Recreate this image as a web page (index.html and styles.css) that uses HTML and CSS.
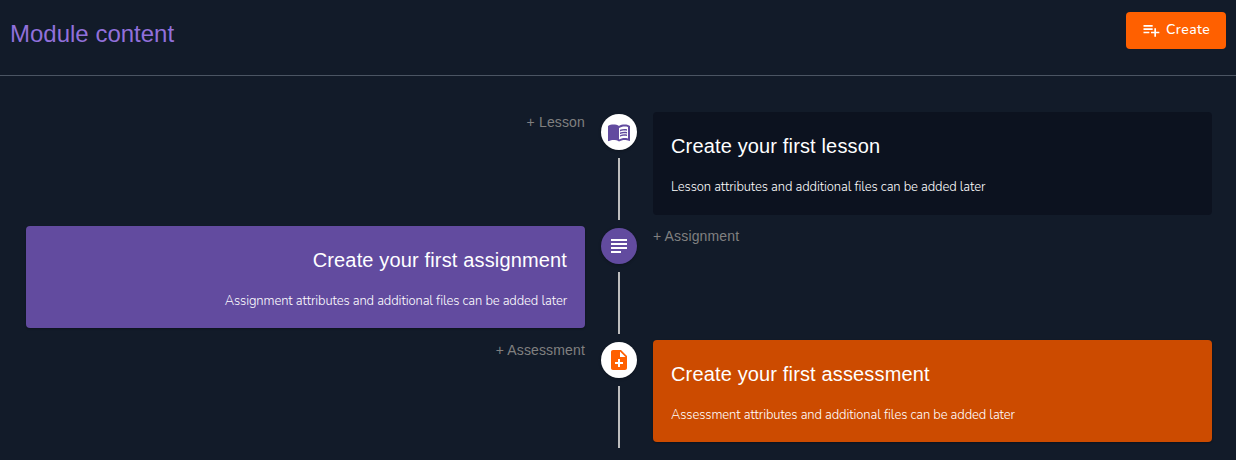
FILE: index.html
```html
<!DOCTYPE html>
<html lang="en">
<head>
<meta charset="utf-8">
<title>Module content</title>
<link rel="stylesheet" href="styles.css">
</head>
<body>
<header class="header">
  <h1 class="title">Module content</h1>
  <button class="create">
    <svg class="create-icon" viewBox="0 0 24 24"><path d="M14 10H3v2h11v-2zm0-4H3v2h11V6zm4 8v-4h-2v4h-4v2h4v4h2v-4h4v-2h-4zM3 16h7v-2H3v2z"/></svg>
    <span class="create-label">Create</span>
  </button>
</header>
<main class="timeline">
  <section class="row">
    <div class="label label-left">+ Lesson</div>
    <div class="separator">
      <div class="dot dot-lesson"><svg class="icon" viewBox="0 0 24 24"><path d="M21 5c-1.11-.35-2.33-.5-3.5-.5-1.95 0-4.05.4-5.5 1.5-1.45-1.1-3.55-1.5-5.5-1.5S2.45 4.9 1 6v14.65c0 .25.25.5.5.5.1 0 .15-.05.25-.05C3.1 20.45 5.05 20 6.5 20c1.95 0 4.05.4 5.5 1.5 1.35-.85 3.8-1.5 5.5-1.5 1.65 0 3.35.3 4.75 1.05.1.05.15.05.25.05.25 0 .5-.25.5-.5V6c-.6-.45-1.25-.75-2-1zm0 13.5c-1.1-.35-2.3-.5-3.5-.5-1.7 0-4.15.65-5.5 1.5V8c1.35-.85 3.8-1.5 5.5-1.5 1.2 0 2.4.15 3.5.5v11.5z"/><path d="M17.5 10.5c.88 0 1.73.09 2.5.26V9.24c-.79-.15-1.64-.24-2.5-.24-1.7 0-3.24.29-4.5.83v1.66c1.13-.64 2.7-.99 4.5-.99zM13 12.49v1.66c1.13-.64 2.7-.99 4.5-.99.88 0 1.73.09 2.5.26V11.9c-.79-.15-1.64-.24-2.5-.24-1.7 0-3.24.3-4.5.83zM17.5 14.33c-1.7 0-3.24.29-4.5.83v1.66c1.13-.64 2.7-.99 4.5-.99.88 0 1.73.09 2.5.26v-1.52c-.79-.16-1.64-.24-2.5-.24z"/></svg></div>
      <div class="connector"></div>
    </div>
    <article class="card card-lesson">
      <h2 class="card-title">Create your first lesson</h2>
      <p class="card-text">Lesson attributes and additional files can be added later</p>
    </article>
  </section>
  <section class="row">
    <article class="card card-assignment">
      <h2 class="card-title">Create your first assignment</h2>
      <p class="card-text">Assignment attributes and additional files can be added later</p>
    </article>
    <div class="separator">
      <div class="dot dot-assignment"><svg class="icon" viewBox="0 0 24 24"><path d="M14 17H4v2h10v-2zm6-8H4v2h16V9zM4 15h16v-2H4v2zM4 5v2h16V5H4z"/></svg></div>
      <div class="connector"></div>
    </div>
    <div class="label">+ Assignment</div>
  </section>
  <section class="row">
    <div class="label label-left">+ Assessment</div>
    <div class="separator">
      <div class="dot dot-assessment"><svg class="icon" viewBox="0 0 24 24"><path d="M14 2H6c-1.1 0-1.99.9-1.99 2L4 20c0 1.1.89 2 1.99 2H18c1.1 0 2-.9 2-2V8l-6-6zm2 14h-3v3h-2v-3H8v-2h3v-3h2v3h3v2zm-3-7V3.5L18.5 9H13z"/></svg></div>
      <div class="connector"></div>
    </div>
    <article class="card card-assessment">
      <h2 class="card-title">Create your first assessment</h2>
      <p class="card-text">Assessment attributes and additional files can be added later</p>
    </article>
  </section>
</main>
</body>
</html>
```
FILE: styles.css
```css
* { box-sizing: border-box; }
body {
  margin: 0;
  height: 460px;
  overflow: hidden;
  background: #121b29;
  color: #fff;
  font-family: "Liberation Sans", Arial, sans-serif;
}
.header {
  display: flex;
  justify-content: space-between;
  align-items: flex-start;
  height: 76px;
  padding: 12px 10px 0;
  border-bottom: 1px solid #4b5563;
}
.title {
  margin: 6px 0 0;
  font-size: 24px;
  line-height: 32px;
  font-weight: 400;
  color: #9170db;
}
.create {
  display: flex;
  align-items: center;
  gap: 5px;
  width: 100px;
  height: 37px;
  padding: 0 0 1px 15px;
  border: 0;
  border-radius: 4px;
  background: #ff6000;
  color: #fff;
  font: 500 14px/24px Nunito, "Open Sans", sans-serif;
  letter-spacing: .4px;
}
.create-icon { width: 20px; height: 20px; fill: currentColor; }
.timeline {
  display: flex;
  flex-direction: column;
  padding: 30px 10px 0;
}
.row {
  display: grid;
  grid-template-columns: 1fr 36px 1fr;
  column-gap: 16px;
  height: 114px;
  padding: 0 14px 0 16px;
}
.label {
  font-size: 14px;
  line-height: 20px;
  letter-spacing: .15px;
  color: #808080;
}
.label, .card { margin-top: 6px; }
.label-left { text-align: right; }
.separator {
  display: flex;
  flex-direction: column;
  align-items: center;
  gap: 8px;
  padding-top: 8px;
}
.dot {
  display: flex;
  align-items: center;
  justify-content: center;
  width: 36px;
  height: 36px;
  border-radius: 50%;
  background: #fff;
  box-shadow: 0 1px 3px rgba(0, 0, 0, .25);
}
.dot-lesson { color: #624b9f; }
.dot-assignment { background: #624b9f; }
.dot-assessment { color: #ff6000; }
.icon { width: 24px; height: 24px; fill: currentColor; }
.connector { width: 2px; height: 62px; background: #bdbdbd; }
.card {
  height: 102px;
  padding: 18px;
  border-radius: 4px;
  box-shadow: 0 1px 2px rgba(0, 0, 0, .3);
}
.card-lesson { height: 103px; background: #0c121f; box-shadow: none; }
.card-assignment { background: #624b9f; text-align: right; }
.card-assessment { background: #cc4b00; }
.card-title {
  margin: 0;
  font-size: 20px;
  line-height: 32px;
  font-weight: 400;
  letter-spacing: .15px;
}
.card-text {
  margin: 15px 0 0;
  font: 300 13px/20px Nunito, "Open Sans", sans-serif;
  letter-spacing: -.1px;
  color: #fff;
}
```
